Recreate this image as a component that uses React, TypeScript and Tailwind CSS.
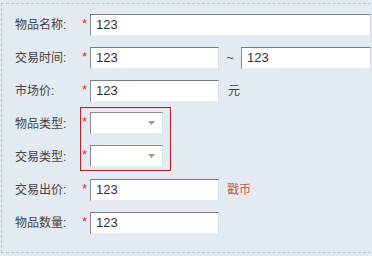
import React from 'react';

const FONT = { fontFamily: '"Liberation Sans", "Noto Sans CJK SC", sans-serif' };

function Star() {
  return <span className="w-[9px] self-start pt-[3px] pl-[1px] text-[13px] leading-[13px] text-[#d9303a]">*</span>;
}

function TextBox({ w, value = '123' }: { w: string; value?: string }) {
  return (
    <div className={`${w} flex h-[22px] items-center border border-t-[#7d7d7d] border-l-[#8a8a8a] border-r-[#d7dce2] border-b-[#e9edf1] bg-white pl-[5px] text-[13px] text-[#333]`}>
      {value}
    </div>
  );
}

function Select() {
  return (
    <div className="flex h-[22px] w-[73px] items-center justify-end border border-t-[#8a8a8a] border-l-[#8a8a8a] border-r-[#dde1e6] border-b-[#e9edf1] bg-white pr-[7px]">
      <svg width="7" height="4" viewBox="0 0 7 4"><path d="M0 0h7L3.5 4z" fill="#9a9a9a" /></svg>
    </div>
  );
}

function Row({ label, children }: { label: string; children: React.ReactNode }) {
  return (
    <div className="flex h-[33px] items-center">
      <span className="w-[66px] text-[12px] text-[#444]">{label}</span>
      <div className="flex h-[22px] items-center">
        <Star />
        {children}
      </div>
    </div>
  );
}

export default function App() {
  return (
    <div className="h-[256px] w-[372px] overflow-hidden bg-[#e4eaf1] pt-[3px] pl-[1px]" style={FONT}>
      <div className="w-[400px] border-t border-l border-b border-dashed border-[#b8c5d3] pt-[4px] pb-[13px] pl-[13px]">
        <Row label="物品名称:">
          <TextBox w="w-[281px]" />
        </Row>
        <Row label="交易时间:">
          <TextBox w="w-[129px]" />
          <span className="w-[22px] text-center text-[13px] text-[#555]">~</span>
          <TextBox w="w-[130px]" />
        </Row>
        <Row label="市场价:">
          <TextBox w="w-[129px]" />
          <span className="ml-[9px] text-[12px] text-[#444]">元</span>
        </Row>
        <div className="flex h-[66px]">
          <div className="flex w-[65px] flex-col">
            <span className="flex h-[33px] items-center text-[12px] text-[#444]">物品类型:</span>
            <span className="flex h-[33px] items-center text-[12px] text-[#444]">交易类型:</span>
          </div>
          <div className="flex h-[64px] w-[91px] flex-col gap-[11px] border border-[#b3262e] pt-[4px] shadow-[inset_0_0_0_1px_#f2d4d6]">
            <div className="flex h-[22px]">
              <Star />
              <Select />
            </div>
            <div className="flex h-[22px]">
              <Star />
              <Select />
            </div>
          </div>
        </div>
        <Row label="交易出价:">
          <TextBox w="w-[129px]" />
          <span className="ml-[8px] text-[12px] text-[#c4594b]">戳币</span>
        </Row>
        <Row label="物品数量:">
          <TextBox w="w-[129px]" />
        </Row>
      </div>
    </div>
  );
}
